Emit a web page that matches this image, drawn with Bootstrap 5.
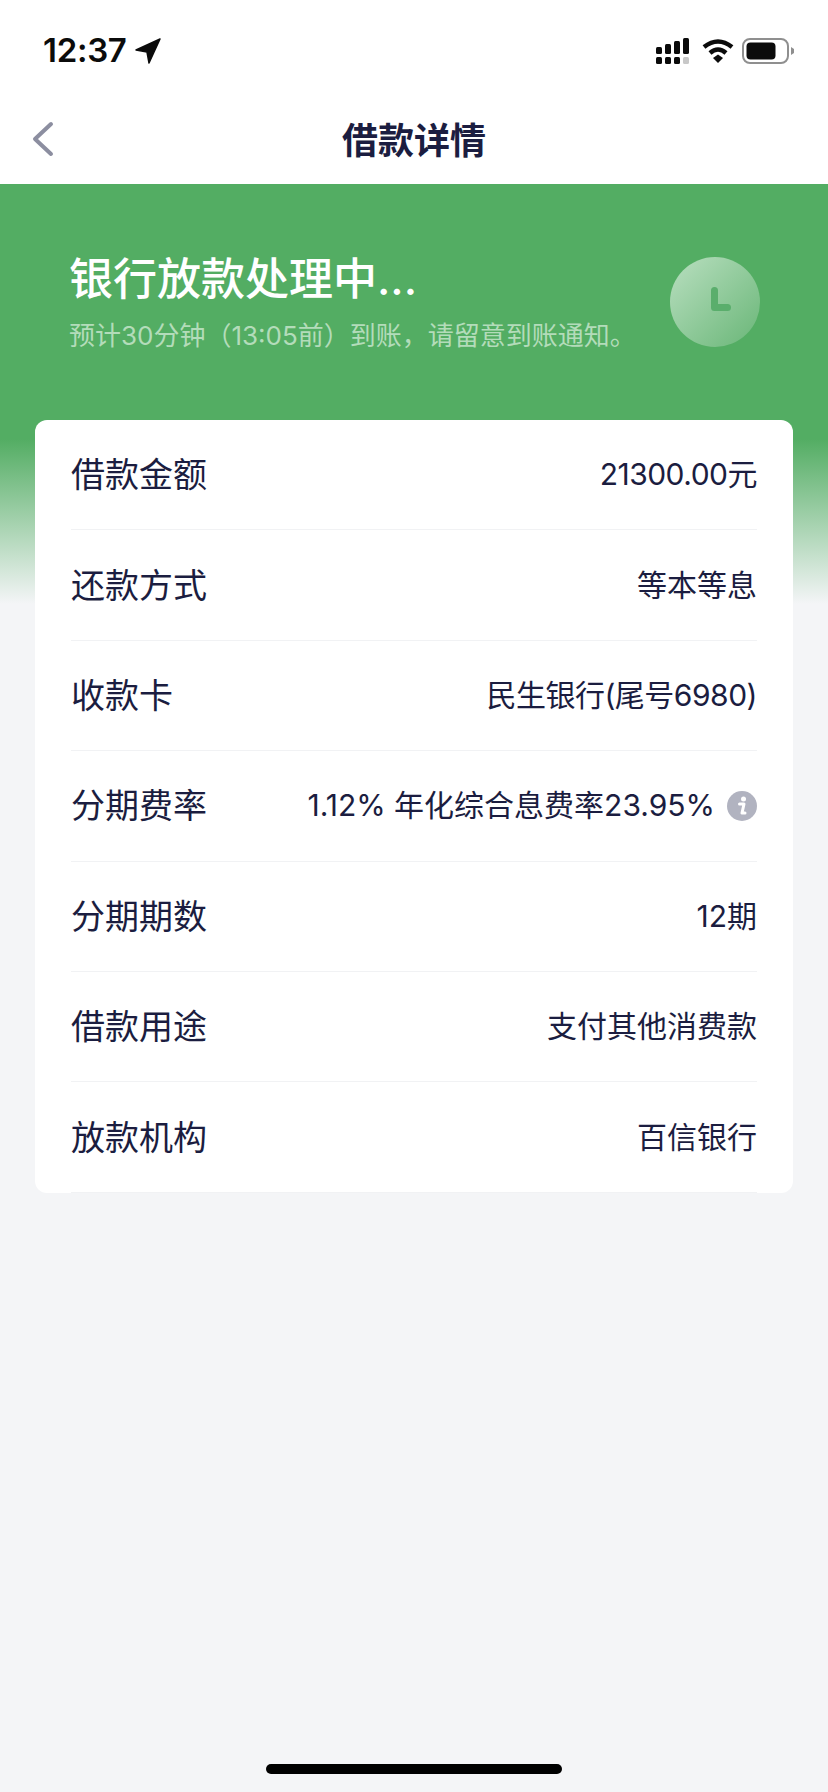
<!DOCTYPE html>
<html lang="zh-CN">
<head>
    <meta charset="UTF-8">
    <meta name="viewport" content="width=device-width, initial-scale=1.0">
    <title>借款详情</title>
    <link href="https://cdn.jsdelivr.net/npm/bootstrap@5.3.3/dist/css/bootstrap.min.css" rel="stylesheet">
    <script src="https://cdn.jsdelivr.net/npm/bootstrap@5.3.3/dist/js/bootstrap.bundle.min.js"></script>
    <style>
        body {
            font-family: Inter, "Noto Sans CJK SC", sans-serif;
            background-color: #f4f5f7;
            color: #1b1d40;
        }
        .app-page {
            height: 1792px;
        }
        .status-bar {
            height: 90px;
            padding: 12px 34px 0 43px;
        }
        .status-time {
            font-size: 33px;
            font-weight: 600;
            color: #0b0b0b;
            letter-spacing: -0.3px;
        }
        .nav-head {
            height: 94px;
            padding-top: 8px;
        }
        .nav-back {
            left: 30px;
            top: 29px;
        }
        .nav-title {
            font-size: 36px;
            font-weight: 700;
            line-height: 1;
        }
        .hero-wrap {
            background: linear-gradient(to bottom, #53ad63 0, #53ad63 255px, #f4f5f7 420px) no-repeat;
            padding: 0 35px;
        }
        .hero-row {
            height: 236px;
            padding: 0 33px 0 34px;
        }
        .hero-title {
            font-size: 44px;
            font-weight: 500;
            line-height: 50px;
            color: #fff;
            margin-top: 2px;
            margin-bottom: 16px;
        }
        .hero-sub {
            font-size: 26px;
            line-height: 32px;
            color: #b3dcba;
        }
        .clock-badge {
            width: 90px;
            height: 90px;
            background: linear-gradient(135deg, #b9dfc0, #69b677);
        }
        .detail-card {
            border-radius: 12px;
            padding: 0 36px;
        }
        .detail-row {
            height: 110.4px;
            border-bottom: 1px solid #f1f2f4;
        }
        .detail-label {
            font-size: 34px;
        }
        .detail-value {
            font-size: 30px;
        }
        .value-tight {
            letter-spacing: -0.5px;
        }
        .home-bar {
            width: 296px;
            height: 10px;
            background-color: #000;
            margin-bottom: 18px;
        }
    </style>
</head>
<body>

<div class="app-page d-flex flex-column">

    <!-- Status bar -->
    <div class="status-bar bg-white d-flex align-items-center justify-content-between">
        <div class="d-flex align-items-center gap-2">
            <span class="status-time">12:37</span>
            <svg width="26" height="26" viewBox="0 0 26 26"><path d="M25 1 L1 12 L12 14 L14 25 Z" fill="#0b0b0b" stroke="#0b0b0b" stroke-width="1.5" stroke-linejoin="round"/></svg>
        </div>
        <div class="d-flex align-items-center gap-2">
            <svg width="34" height="26" viewBox="0 0 34 26">
                <rect x="0" y="9" width="6" height="7" rx="1.5" fill="#0b0b0b"/>
                <rect x="9" y="6" width="6" height="10" rx="1.5" fill="#0b0b0b"/>
                <rect x="18" y="3" width="6" height="13" rx="1.5" fill="#0b0b0b"/>
                <rect x="27" y="0" width="6" height="16" rx="1.5" fill="#0b0b0b"/>
                <rect x="0" y="19" width="6" height="7" rx="1.5" fill="#0b0b0b"/>
                <rect x="9" y="19" width="6" height="7" rx="1.5" fill="#0b0b0b"/>
                <rect x="18" y="19" width="6" height="7" rx="1.5" fill="#0b0b0b"/>
                <rect x="27" y="19" width="6" height="7" rx="1.5" fill="#c8c8c8"/>
            </svg>
            <svg width="32" height="24" viewBox="0 0 32 24" class="ms-1">
                <path d="M2 8 Q16 -3 30 8" fill="none" stroke="#0b0b0b" stroke-width="4.5"/>
                <path d="M8 14 Q16 7 24 14" fill="none" stroke="#0b0b0b" stroke-width="4.5"/>
                <path d="M11 19 L16 15.5 L21 19 L16 24 Z" fill="#0b0b0b"/>
            </svg>
            <svg width="52" height="26" viewBox="0 0 52 26">
                <rect x="1" y="1" width="45" height="24" rx="7" fill="none" stroke="#8f8f8f" stroke-width="2"/>
                <rect x="4.500" y="4.500" width="29" height="17" rx="4" fill="#0b0b0b"/>
                <path d="M49 9 L52 11 L52 15 L49 17 Z" fill="#8f8f8f"/>
            </svg>
        </div>
    </div>

    <!-- Nav head -->
    <div class="nav-head bg-white position-relative d-flex align-items-center justify-content-center">
        <svg class="nav-back position-absolute" width="26" height="40" viewBox="0 0 26 40"><path d="M21 5 L5 20 L21 35" fill="none" stroke="#8c8ea0" stroke-width="4" stroke-linecap="round" stroke-linejoin="round"/></svg>
        <span class="nav-title">借款详情</span>
    </div>

    <!-- Hero and detail card -->
    <div class="hero-wrap">
        <div class="hero-row d-flex align-items-center justify-content-between">
            <div>
                <div class="hero-title">银行放款处理中...</div>
                <div class="hero-sub">预计30分钟（13:05前）到账，请留意到账通知。</div>
            </div>
            <div class="clock-badge rounded-circle d-flex align-items-center justify-content-center">
                <svg width="48" height="48" viewBox="0 0 48 48"><path d="M23.500 12.500 V29.500 H36.500" fill="none" stroke="#5aae6c" stroke-width="7" stroke-linecap="round" stroke-linejoin="round"/></svg>
            </div>
        </div>

        <div class="detail-card bg-white">
            <div class="detail-row d-flex align-items-center justify-content-between">
                <span class="detail-label">借款金额</span>
                <span class="detail-value value-tight">21300.00元</span>
            </div>
            <div class="detail-row d-flex align-items-center justify-content-between">
                <span class="detail-label">还款方式</span>
                <span class="detail-value">等本等息</span>
            </div>
            <div class="detail-row d-flex align-items-center justify-content-between">
                <span class="detail-label">收款卡</span>
                <span class="detail-value value-tight">民生银行(尾号6980)</span>
            </div>
            <div class="detail-row d-flex align-items-center justify-content-between">
                <span class="detail-label">分期费率</span>
                <span class="detail-value d-flex align-items-center gap-2">
                    1.12% 年化综合息费率23.95%
                    <svg width="30" height="30" viewBox="0 0 30 30" class="ms-1">
                        <circle cx="15" cy="15" r="15" fill="#b1b3c0"/>
                        <circle cx="16.500" cy="8" r="2.500" fill="#fff"/>
                        <path d="M12.500 13 H17 L15 22 H18" fill="none" stroke="#fff" stroke-width="3" stroke-linecap="round" stroke-linejoin="round"/>
                    </svg>
                </span>
            </div>
            <div class="detail-row d-flex align-items-center justify-content-between">
                <span class="detail-label">分期期数</span>
                <span class="detail-value">12期</span>
            </div>
            <div class="detail-row d-flex align-items-center justify-content-between">
                <span class="detail-label">借款用途</span>
                <span class="detail-value">支付其他消费款</span>
            </div>
            <div class="detail-row d-flex align-items-center justify-content-between">
                <span class="detail-label">放款机构</span>
                <span class="detail-value">百信银行</span>
            </div>
        </div>
    </div>

    <!-- Home indicator -->
    <div class="home-bar rounded-pill mx-auto mt-auto"></div>
</div>

</body>
</html>
